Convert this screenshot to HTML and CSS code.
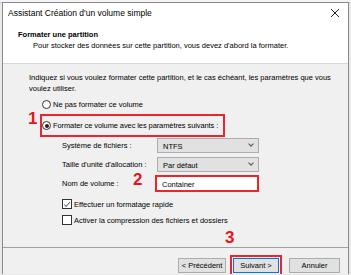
FILE: index.html
```html
<!DOCTYPE html>
<html>
    <head>
        <title>Assistant Création d'un volume simple</title>
        <link rel="stylesheet" href="styles.css">
    </head>
    <body>
        <div class="behind"></div>
        <section class="dialog">
            <div class="titlebar">
                <span class="title">Assistant Création d'un volume simple</span>
                <svg class="close" width="10" height="10" viewBox="0 0 10 10">
                    <path d="M1 1 L9 9 M9 1 L1 9" stroke="#222" stroke-width="1" fill="none" />
                </svg>
            </div>
            <div class="header">
                <h3>Formater une partition</h3>
                <p>Pour stocker des données sur cette partition, vous devez d'abord la formater.</p>
            </div>
            <div class="content">
                <p class="intro">Indiquez si vous voulez formater cette partition, et le cas échéant, les paramètres que vous voulez utiliser.</p>
                <div class="radio first">
                    <span class="dot"></span>Ne pas formater ce volume
                </div>
                <div class="radio marked">
                    <span class="dot on"></span>Formater ce volume avec les paramètres suivants :
                </div>
                <div class="fields">
                    <span>Système de fichiers :</span>
                    <div class="select">NTFS<i></i></div>
                    <span>Taille d'unité d'allocation :</span>
                    <div class="select">Par défaut<i></i></div>
                    <span>Nom de volume :</span>
                    <div class="textbox">Container</div>
                </div>
                <div class="check">
                    <span class="box">
                        <svg width="9" height="9" viewBox="0 0 9 9"><path d="M1.5 4.5 L3.5 6.8 L7.8 1.8" stroke="#222" stroke-width="1" fill="none" /></svg>
                    </span>Effectuer un formatage rapide
                </div>
                <div class="check">
                    <span class="box"></span>Activer la compression des fichiers et dossiers
                </div>
            </div>
            <div class="footer">
                <button>&lt; Précédent</button>
                <div class="marked-btn"><button class="default">Suivant &gt;</button></div>
                <button class="cancel">Annuler</button>
            </div>
            <span class="num n1">1</span>
            <span class="num n2">2</span>
            <span class="num n3">3</span>
        </section>
    </body>
</html>
```

FILE: styles.css
```css
*{
    font-family: 'Liberation Sans', Arial, sans-serif;
    box-sizing: border-box;
}
html, body{
    margin: 0;
    padding: 0;
    height: 100%;
    overflow: hidden;
    background: #e9e9e9;
}
body{
    font-size: 7.5px;
    color: #000;
}
.behind{
    height: 3px;
    background: #f4f4f4;
    border-bottom: 1px solid #d0d0d0;
}
.dialog{
    position: relative;
    margin: -1px 0 0 2px;
    width: 347px;
    height: 272px;
    overflow: hidden;
    background: #f0f0f0;
    border: 1px solid #8a8a8a;
    border-bottom: none;
}
.titlebar{
    display: flex;
    justify-content: space-between;
    align-items: center;
    height: 20px;
    padding: 0 8px 0 5px;
    background: #fff;
}
.title{
    font-size: 8.5px;
}
.header{
    background: #fff;
    height: 41px;
    padding: 7px 0 0 15px;
    border-bottom: 1px solid #d8d8d8;
}
h3{
    margin: 0;
    font-size: 7.5px;
    font-weight: bold;
    line-height: 10px;
}
.header p{
    margin: 1px 0 0 15px;
    line-height: 10px;
}
.content{
    padding: 9px 0 0 26px;
}
.intro{
    margin: 0;
    width: 305px;
    line-height: 10.5px;
}
.radio{
    display: flex;
    align-items: center;
    height: 12px;
    margin-left: 13px;
    white-space: nowrap;
}
.radio.first{
    margin-top: 4px;
}
.radio.marked{
    margin: 4px 0 0 11px;
    width: 185px;
    height: 23px;
    border: 2px solid #e8262c;
    letter-spacing: -0.1px;
}
.dot{
    flex: none;
    width: 9px;
    height: 9px;
    margin-right: 2px;
    border: 1px solid #333;
    border-radius: 50%;
    background: #fff;
    position: relative;
}
.dot.on::after{
    content: "";
    position: absolute;
    left: 1.5px;
    top: 1.5px;
    width: 4px;
    height: 4px;
    border-radius: 50%;
    background: #222;
}
.fields{
    display: grid;
    grid-template-columns: 95px 102px;
    grid-auto-rows: 15px;
    row-gap: 4px;
    align-items: center;
    margin: 1px 0 0 33px;
}
.select{
    position: relative;
    height: 15px;
    padding: 3px 0 0 5px;
    background: #e1e1e1;
    border: 1px solid #adadad;
}
.select i{
    position: absolute;
    right: 5px;
    top: 3px;
    width: 4px;
    height: 4px;
    border-right: 1px solid #555;
    border-bottom: 1px solid #555;
    transform: rotate(45deg);
}
.textbox{
    height: 17px;
    margin-left: -2px;
    padding: 3px 0 0 5px;
    background: #fff;
    border: 2px solid #e8262c;
}
.check{
    display: flex;
    align-items: center;
    height: 10px;
    margin-left: 33px;
}
.check + .check{
    margin-top: 6px;
}
.fields + .check{
    margin-top: 8px;
}
.box{
    width: 10px;
    height: 10px;
    margin-right: 2px;
    border: 1px solid #333;
    background: #fff;
    display: flex;
}
.footer{
    display: flex;
    align-items: center;
    margin-top: 22px;
    padding: 7px 0 0 175px;
    border-top: 1px solid #a0a0a0;
}
button{
    width: 48px;
    height: 15px;
    padding: 0;
    font-size: 7.5px;
    color: #000;
    background: #e1e1e1;
    border: 1px solid #adadad;
}
.marked-btn{
    margin-left: 4px;
    padding: 1px;
    border: 2px solid #e8262c;
}
.marked-btn button{
    width: 46px;
    border: 1px solid #0078d7;
}
.cancel{
    margin-left: 7px;
    width: 51px;
}
.num{
    position: absolute;
    color: #e8141c;
    font-weight: bold;
    font-size: 17px;
    line-height: 17px;
}
.n1{
    left: 25px;
    top: 107px;
}
.n2{
    left: 130px;
    top: 168px;
}
.n3{
    left: 222px;
    top: 226px;
}
```
